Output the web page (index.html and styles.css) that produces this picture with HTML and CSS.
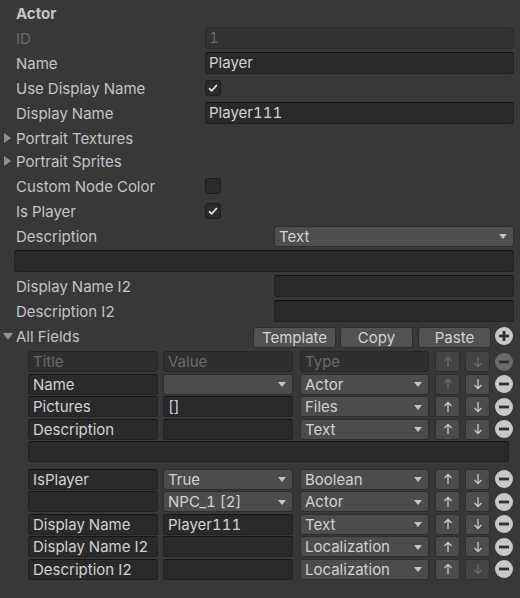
FILE: index.html
```html
<!DOCTYPE html>
<html lang="en">
<head>
    <meta charset="UTF-8">
    <title>Actor Inspector</title>
    <link rel="stylesheet" href="styles.css">
</head>
<body>
    <svg class="defs" width="0" height="0">
        <symbol id="up" viewBox="0 0 10 12">
            <path d="M5 11V1.5M1.5 5L5 1.5 8.5 5" fill="none" stroke="currentColor" stroke-width="1.3"/>
        </symbol>
        <symbol id="down" viewBox="0 0 10 12">
            <path d="M5 1v9.5M1.5 7L5 10.5 8.5 7" fill="none" stroke="currentColor" stroke-width="1.3"/>
        </symbol>
        <symbol id="minus" viewBox="0 0 18 18">
            <circle cx="9" cy="9" r="9" fill="currentColor"/>
            <rect x="4" y="7.6" width="10" height="2.8" fill="#303030"/>
        </symbol>
        <symbol id="plus" viewBox="0 0 18 18">
            <circle cx="9" cy="9" r="9" fill="currentColor"/>
            <rect x="4" y="7.6" width="10" height="2.8" fill="#303030"/>
            <rect x="7.6" y="4" width="2.8" height="10" fill="#303030"/>
        </symbol>
        <symbol id="check" viewBox="0 0 16 16">
            <path d="M3.5 8.3L6.6 11.2 12.4 4.6" fill="none" stroke="currentColor" stroke-width="2"/>
        </symbol>
    </svg>

    <div class="inspector">
        <div class="row"><span class="label title">Actor</span></div>
        <div class="row">
            <span class="label dim">ID</span>
            <div class="field disabled">1</div>
        </div>
        <div class="row">
            <span class="label">Name</span>
            <div class="field">Player</div>
        </div>
        <div class="row">
            <span class="label">Use Display Name</span>
            <span class="checkbox"><svg><use href="#check"/></svg></span>
        </div>
        <div class="row">
            <span class="label">Display Name</span>
            <div class="field">Player111</div>
        </div>
        <div class="row foldout tight">
            <span class="arrow-right"></span>
            <span class="label">Portrait Textures</span>
        </div>
        <div class="row foldout">
            <span class="arrow-right"></span>
            <span class="label">Portrait Sprites</span>
        </div>
        <div class="row">
            <span class="label">Custom Node Color</span>
            <span class="checkbox"></span>
        </div>
        <div class="row">
            <span class="label">Is Player</span>
            <span class="checkbox"><svg><use href="#check"/></svg></span>
        </div>
        <div class="row">
            <span class="label long">Description</span>
            <div class="popup">Text<span class="caret"></span></div>
        </div>
        <div class="row area-row">
            <div class="field"></div>
        </div>
        <div class="row">
            <span class="label long">Display Name I2</span>
            <div class="field"></div>
        </div>
        <div class="row">
            <span class="label long">Description I2</span>
            <div class="field"></div>
        </div>

        <div class="row foldout">
            <span class="arrow-down"></span>
            <span class="label">All Fields</span>
            <div class="toolbar">
                <button class="btn template">Template</button>
                <button class="btn copy">Copy</button>
                <button class="btn paste">Paste</button>
                <svg class="round add"><use href="#plus"/></svg>
            </div>
        </div>

        <div class="fields">
            <div class="frow">
                <div class="cell c-title head">Title</div>
                <div class="cell c-value head">Value</div>
                <div class="cell c-type head">Type</div>
                <div class="mini c-up off"><svg><use href="#up"/></svg></div>
                <div class="mini c-down off"><svg><use href="#down"/></svg></div>
                <svg class="round c-del off"><use href="#minus"/></svg>
            </div>
            <div class="frow">
                <div class="cell c-title">Name</div>
                <div class="cell c-value popup"><span></span><span class="caret"></span></div>
                <div class="cell c-type popup">Actor<span class="caret"></span></div>
                <div class="mini c-up off"><svg><use href="#up"/></svg></div>
                <div class="mini c-down"><svg><use href="#down"/></svg></div>
                <svg class="round c-del"><use href="#minus"/></svg>
            </div>
            <div class="frow">
                <div class="cell c-title">Pictures</div>
                <div class="cell c-value">[]</div>
                <div class="cell c-type popup">Files<span class="caret"></span></div>
                <div class="mini c-up"><svg><use href="#up"/></svg></div>
                <div class="mini c-down"><svg><use href="#down"/></svg></div>
                <svg class="round c-del"><use href="#minus"/></svg>
            </div>
            <div class="frow">
                <div class="cell c-title">Description</div>
                <div class="cell c-value"></div>
                <div class="cell c-type popup">Text<span class="caret"></span></div>
                <div class="mini c-up"><svg><use href="#up"/></svg></div>
                <div class="mini c-down"><svg><use href="#down"/></svg></div>
                <svg class="round c-del"><use href="#minus"/></svg>
            </div>
            <div class="frow gap-after">
                <div class="cell c-wide"></div>
            </div>
            <div class="frow">
                <div class="cell c-title">IsPlayer</div>
                <div class="cell c-value popup">True<span class="caret"></span></div>
                <div class="cell c-type popup">Boolean<span class="caret"></span></div>
                <div class="mini c-up"><svg><use href="#up"/></svg></div>
                <div class="mini c-down"><svg><use href="#down"/></svg></div>
                <svg class="round c-del"><use href="#minus"/></svg>
            </div>
            <div class="frow">
                <div class="cell c-title"></div>
                <div class="cell c-value popup">NPC_1 [2]<span class="caret"></span></div>
                <div class="cell c-type popup">Actor<span class="caret"></span></div>
                <div class="mini c-up"><svg><use href="#up"/></svg></div>
                <div class="mini c-down"><svg><use href="#down"/></svg></div>
                <svg class="round c-del"><use href="#minus"/></svg>
            </div>
            <div class="frow">
                <div class="cell c-title">Display Name</div>
                <div class="cell c-value">Player111</div>
                <div class="cell c-type popup">Text<span class="caret"></span></div>
                <div class="mini c-up"><svg><use href="#up"/></svg></div>
                <div class="mini c-down"><svg><use href="#down"/></svg></div>
                <svg class="round c-del"><use href="#minus"/></svg>
            </div>
            <div class="frow">
                <div class="cell c-title">Display Name I2</div>
                <div class="cell c-value"></div>
                <div class="cell c-type popup">Localization<span class="caret"></span></div>
                <div class="mini c-up"><svg><use href="#up"/></svg></div>
                <div class="mini c-down"><svg><use href="#down"/></svg></div>
                <svg class="round c-del"><use href="#minus"/></svg>
            </div>
            <div class="frow">
                <div class="cell c-title">Description I2</div>
                <div class="cell c-value"></div>
                <div class="cell c-type popup">Localization<span class="caret"></span></div>
                <div class="mini c-up"><svg><use href="#up"/></svg></div>
                <div class="mini c-down off"><svg><use href="#down"/></svg></div>
                <svg class="round c-del"><use href="#minus"/></svg>
            </div>
        </div>
    </div>
</body>
</html>
```

FILE: styles.css
```css
/* Unity-like dark inspector */
* {
    box-sizing: border-box;
}

body {
    margin: 0;
    background-color: #383838;
    font-family: Inter, "Noto Sans", sans-serif;
    font-size: 15px;
    font-variant-numeric: tabular-nums;
    color: #c4c4c4;
}

.defs {
    position: absolute;
}

.inspector {
    padding: 2px 6px 0 0;
}

/* Property rows */
.row {
    display: flex;
    align-items: center;
    height: 22px;
    margin-bottom: 3px;
    padding-left: 16px;
}

.row.tight {
    margin-bottom: 1px;
}

.label {
    width: 189px;
    flex: none;
    white-space: nowrap;
}

.label.long {
    width: 258px;
}

.label.title {
    font-weight: 700;
}

.label.dim {
    color: #6b6b6b;
}

.field {
    flex: 1;
    height: 22px;
    padding: 0 3px;
    line-height: 20px;
    color: #d2d2d2;
    background-color: #2a2a2a;
    border: 1px solid #212121;
    border-top-color: #111;
    border-radius: 3px;
    white-space: nowrap;
}

.field.disabled {
    background-color: #323232;
    border-color: #2a2a2a;
    color: #6b6b6b;
}

.area-row {
    padding-left: 14px;
}

.checkbox {
    width: 16px;
    height: 16px;
    background-color: #2a2a2a;
    border: 1px solid #1d1d1d;
    border-radius: 3px;
    color: #e4e4e4;
}

.checkbox svg {
    display: block;
    width: 14px;
    height: 14px;
}

.popup {
    flex: 1;
    display: flex;
    align-items: center;
    justify-content: space-between;
    height: 21px;
    padding: 0 6px 0 4px;
    color: #d2d2d2;
    background-color: #4e4e4e;
    border: 1px solid #2e2e2e;
    border-radius: 3px;
    white-space: nowrap;
}

.caret {
    width: 0;
    height: 0;
    margin-top: 1px;
    border-left: 4.5px solid transparent;
    border-right: 4.5px solid transparent;
    border-top: 5px solid #c4c4c4;
}

/* Foldouts */
.foldout {
    position: relative;
}

.arrow-right,
.arrow-down {
    position: absolute;
    width: 0;
    height: 0;
}

.arrow-right {
    left: 4px;
    top: 6px;
    border-top: 5px solid transparent;
    border-bottom: 5px solid transparent;
    border-left: 7px solid #8f8f8f;
}

.arrow-down {
    left: 3px;
    top: 8px;
    border-left: 5px solid transparent;
    border-right: 5px solid transparent;
    border-top: 7px solid #8f8f8f;
}

.toolbar {
    display: flex;
    align-items: center;
    margin-left: auto;
    margin-right: 1px;
}

.btn {
    height: 21px;
    margin-top: 3px;
    padding: 0;
    font-family: inherit;
    font-size: 15px;
    color: #d2d2d2;
    background-color: #525252;
    border: 1px solid #2e2e2e;
    border-radius: 3px;
}

.template {
    width: 83px;
}

.copy {
    width: 73px;
    margin-left: 4px;
}

.paste {
    width: 73px;
    margin-left: 5px;
}

.round {
    width: 18px;
    height: 18px;
    flex: none;
    color: #c8c8c8;
}

.add {
    margin-left: 4px;
}

/* All Fields table */
.fields {
    padding-top: 1px;
    padding-left: 28px;
    padding-right: 1px;
}

.frow {
    display: flex;
    align-items: center;
    height: 21px;
    margin-bottom: 1.5px;
}

.frow.gap-after {
    margin-bottom: 6.5px;
}

.cell {
    height: 21px;
    flex: none;
    padding: 0 4px;
    line-height: 19px;
    color: #d2d2d2;
    background-color: #2a2a2a;
    border: 1px solid #212121;
    border-top-color: #151515;
    border-radius: 3px;
    white-space: nowrap;
    overflow: hidden;
}

.cell.head {
    color: #6a6a6a;
    background-color: #2f2f2f;
    border-color: #262626;
}

.cell.popup {
    display: flex;
    padding-right: 6px;
    background-color: #4c4c4c;
    border-color: #2e2e2e;
}

.c-title {
    width: 130px;
}

.c-value {
    width: 130px;
    margin-left: 5px;
}

.c-type {
    width: 129px;
    margin-left: 7px;
}

.c-wide {
    width: 481px;
}

.mini {
    width: 25px;
    height: 21px;
    flex: none;
    display: flex;
    align-items: center;
    justify-content: center;
    color: #c8c8c8;
    background-color: #4c4c4c;
    border: 1px solid #2e2e2e;
    border-radius: 3px;
}

.mini svg {
    width: 10px;
    height: 12px;
}

.mini.off {
    color: #6a6a6a;
    background-color: #444;
}

.c-up {
    margin-left: 6px;
}

.c-down {
    margin-left: 5px;
}

.c-del {
    margin-left: 5px;
}

.round.off {
    color: #6a6a6a;
}
```
